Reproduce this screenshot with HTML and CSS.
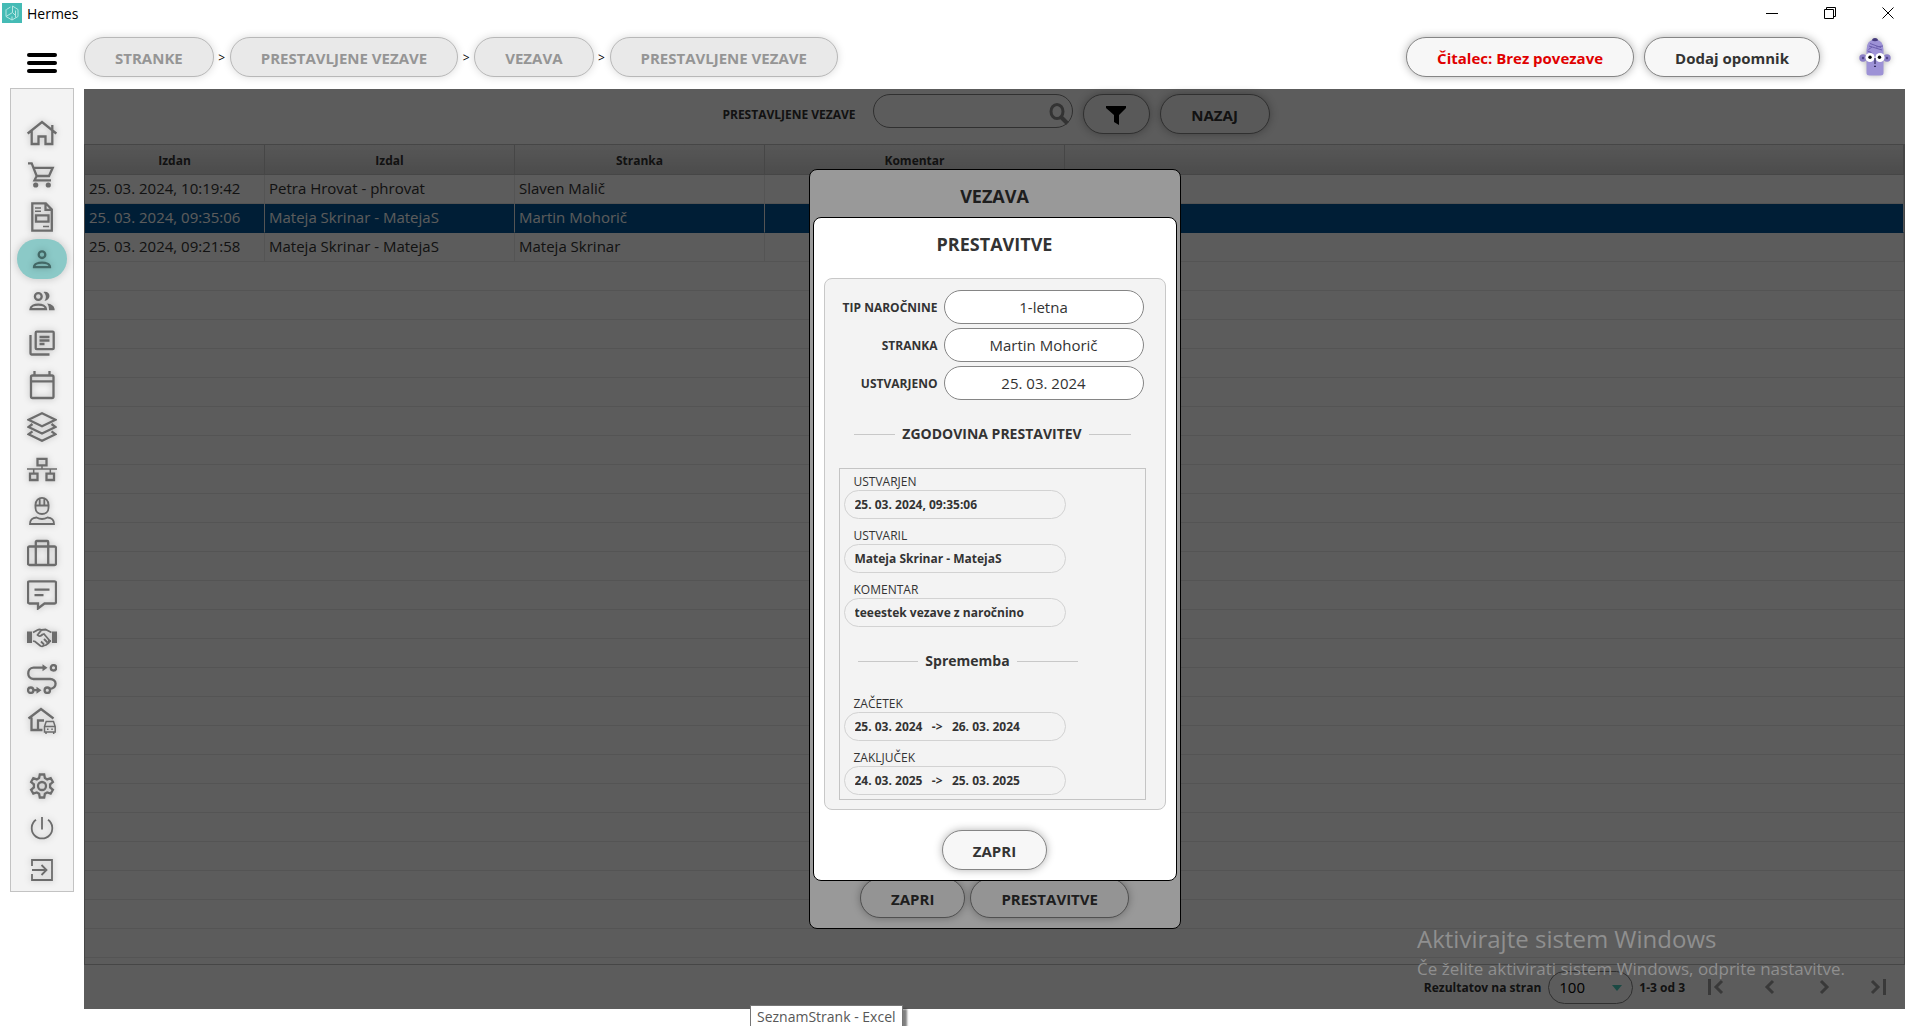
FILE: index.html
```html
<!DOCTYPE html>
<html lang="sl">
<head>
    <meta charset="UTF-8">
    <meta name="viewport" content="width=device-width, initial-scale=1.0">
    <title>Hermes</title>
    <link rel="stylesheet" href="styles.css">
</head>
<body>
    <div class="titlebar">
        <svg class="logo" viewBox="0 0 20 20" fill="none" stroke="#b5e6e2" stroke-width="1">
            <rect width="20" height="20" fill="#45bbb5" stroke="none"/>
            <path d="M4.500 6.500l4-2.500M10.500 3l5.500 3.500v7L10 17l-6-3.500v-7M10.500 3v6.500L4 13.500M10.500 9.500l3 3M13.500 7.500v7M10 17v-3.500"/>
        </svg>
        <span class="app-name">Hermes</span>
        <div class="window-buttons">
            <button type="button" aria-label="Minimiraj"><svg viewBox="0 0 12 12"><path d="M0 6.500h12"/></svg></button>
            <button type="button" aria-label="Obnovi"><svg viewBox="0 0 12 12"><path d="M.5 2.500h9v9h-9zM2.500 2.500v-2h9v9h-2"/></svg></button>
            <button type="button" aria-label="Zapri okno"><svg viewBox="0 0 12 12"><path d="M.5.5l11 11M11.500.5l-11 11"/></svg></button>
        </div>
    </div>

    <header class="header">
        <button type="button" class="menu-toggle" aria-label="Meni"><span></span><span></span><span></span></button>
        <nav class="breadcrumbs">
            <button type="button" class="btn crumb">STRANKE</button>
            <span>&gt;</span>
            <button type="button" class="btn crumb">PRESTAVLJENE VEZAVE</button>
            <span>&gt;</span>
            <button type="button" class="btn crumb">VEZAVA</button>
            <span>&gt;</span>
            <button type="button" class="btn crumb">PRESTAVLJENE VEZAVE</button>
        </nav>
        <div class="header-actions">
            <button type="button" class="btn reader">Čitalec: Brez povezave</button>
            <button type="button" class="btn">Dodaj opomnik</button>
            <svg class="avatar" viewBox="0 0 32 38">
                <path d="M7.500 35V12Q7.500 1.500 16 1.500T24.500 12v23q0 2.500-3 2.500h-11q-3 0-3-2.500z" fill="#9d92d6"/>
                <path d="M13 2.500Q13 0 16 0t3 2.500q-3 1.500-6 0z" fill="#453a7c"/>
                <path d="M10 8l13 4M11 5.500l11 4M9.500 11.500L13 9M17 9l7-1M8.500 13l4 1.500" stroke="#6b5eae" fill="none"/>
                <circle cx="4" cy="20" r="3.700" fill="#8b7fc6"/>
                <circle cx="28" cy="20" r="3.700" fill="#8b7fc6"/>
                <circle cx="4" cy="20" r="1.200" fill="#4f4488"/>
                <circle cx="28" cy="20" r="1.200" fill="#4f4488"/>
                <circle cx="11" cy="19.500" r="4.600" fill="#fff"/>
                <circle cx="21" cy="19.500" r="4.600" fill="#fff"/>
                <circle cx="11" cy="19.200" r="1.700"/>
                <circle cx="20.500" cy="19.200" r="1.700"/>
                <path d="M16 20v6M15 28.300h2" stroke="#30285c" stroke-width="1.200"/>
            </svg>
        </div>
    </header>

    <div class="layout">
        <nav class="sidebar">
            <a href="#" aria-label="Domov"><svg viewBox="0 0 30 30"><path d="M.7 15.500L15 4l14.300 11.500M4.700 13v13h6.800v-7.500h7V26h6.800V13M25.300 12V7"/></svg></a>
            <a href="#" aria-label="Košarica"><svg viewBox="0 0 30 30"><path d="M1 3.300h3.700l5 12.700h12.300l3.700-8.200H7M9.700 16L7.500 20.300H24"/><g class="solid"><circle cx="8.700" cy="25" r="2.600"/><circle cx="21.300" cy="25" r="2.600"/></g></svg></a>
            <a href="#" aria-label="Računi"><svg viewBox="0 0 30 30"><path d="M5.300 1.300h13.500l6 6.200v21.200H5.300zM18.500 1.500v6.300h6M9 13.300h12.500v6.400H9z"/><path d="M8 6h6M8 9.300h6M16 24.500h6" stroke-width="1.500"/></svg></a>
            <a href="#" class="active" aria-label="Stranke"><svg viewBox="0 0 30 30"><circle cx="15" cy="10.700" r="3.300"/><path d="M7 23.200c0-6 16-6 16 0z"/></svg></a>
            <a href="#" aria-label="Skupine"><svg viewBox="0 0 30 30"><circle cx="11.300" cy="10.500" r="3.400"/><path d="M3.500 23.200c0-6 15.500-6 15.500 0z"/><path class="solid" d="M16.500 6c7-1.500 8.500 7.500 1 9 2-3 2-6-1-9zM20 17.500c4.500.3 7.700 2.500 7.700 6.700H22c0-3-.5-5-2-6.700z"/></svg></a>
            <a href="#" aria-label="Knjižnica"><svg viewBox="0 0 30 30"><rect x="8.700" y="3.700" width="18" height="17.500" rx="1"/><path d="M3.500 7v18.500q0 1 1 1h18M12.500 9h10M12.500 12.500h10M12.500 16h5"/></svg></a>
            <a href="#" aria-label="Koledar"><svg viewBox="0 0 30 30"><rect x="4" y="5.500" width="22.500" height="22.500" rx="1.500"/><path d="M4 11.300h22.500M7.500 1v4M22.500 1v4"/></svg></a>
            <a href="#" aria-label="Sloji"><svg viewBox="0 0 30 30"><path d="M15 1.300l13.500 6.500L15 14.300 1.500 7.800zM5.500 12l-4 3L15 21.500 28.500 15l-4-3M5.500 19.300l-4 3L15 28.800l13.500-6.500-4-3"/></svg></a>
            <a href="#" aria-label="Omrežje"><svg viewBox="0 0 30 30"><path d="M10.500 4.800h9v6.500h-9zM3 19.700h7.500V26H3zM19.500 19.700H27V26h-7.500z"/><path d="M0 15h30M15 11v4M6.700 15v4.500M23.300 15v4.500" stroke-width="1.500"/></svg></a>
            <a href="#" aria-label="Delavci"><svg viewBox="0 0 30 30"><path d="M8.500 9c0-9.500 13-9.500 13 0v3c0 8-13 8-13 0zM7.500 9.500h15M12.700 3v6M17.300 3v6M3 28c0-4.500 2-6 6.500-6.500q5.500 3 11 0C25 22 27 23.500 27 28z" stroke-width="1.800"/></svg></a>
            <a href="#" aria-label="Kovček"><svg viewBox="0 0 30 30"><rect x="1" y="8.500" width="28" height="18.500" rx="1.500"/><path d="M8.800 27V4q0-1 1-1h10.400q1 0 1 1v23"/></svg></a>
            <a href="#" aria-label="Sporočila"><svg viewBox="0 0 30 30"><path d="M2.500 1.300h25q1.500 0 1.500 1.500v19q0 1.700-1.500 1.700h-10L11 28.500v-5H2.500Q1 23.500 1 21.800v-19q0-1.500 1.500-1.500zM7.500 9.700h15M7.500 15.200h9"/></svg></a>
            <a href="#" aria-label="Partnerji"><svg viewBox="0 0 30 30"><path class="solid" d="M0 9.500h5V21H0zM25 9.500h5V21h-5z"/><path d="M6 10.500l4.500-2.500q2-1 4 0l4-.5 6 3M6 19l2 .5 5.500 4.500q2 .7 3-.3l2.500-.7 2.500-2 2-2.500M14.500 8l-4 5q2 2.500 5-.5l1.500-.5 5.500 6.500M14 19.500l3 3M17 17l3.500 3.500M24 19h-3" stroke-width="1.800"/></svg></a>
            <a href="#" aria-label="Poti"><svg viewBox="0 0 30 30"><circle cx="26.500" cy="3.800" r="2.700"/><circle cx="3.700" cy="26.200" r="2.700"/><circle cx="20.300" cy="26.200" r="2.700"/><path d="M17 3.700H6.500C-.5 4-.5 15 6.500 15H23c7 0 8 9-.5 10M7 26.200h3"/><path class="solid" d="M15.500.3l5 3.500-5 3.500zM9.500 22.700l5 3.500-5 3.500z"/></svg></a>
            <a href="#" aria-label="Dostava"><svg viewBox="0 0 30 30"><path d="M1.500 12.500L14 3l12.500 9.500M4.500 11.500V24H11v-9.500h6M11 24h4.500"/><path d="M17.500 20.500l1.700-5h7.300l1.700 5v5.500H17.500zM17.500 20.500h10.700M19 26v2M26.700 26v2M20 23.200h1.500M24.300 23.200h1.500" stroke-width="1.500"/></svg></a>
            <a href="#" class="settings" aria-label="Nastavitve"><svg viewBox="0 0 30 30"><path d="M12.800 3.500h4.400l.7 3.600 2.300 1.300 3.500-1.200 2.200 3.800-2.800 2.400v3l2.800 2.400-2.200 3.800-3.500-1.200-2.300 1.300-.7 3.800h-4.400l-.7-3.800-2.300-1.300-3.500 1.200-2.200-3.800 2.800-2.400v-3L4.100 11l2.200-3.800 3.500 1.200 2.300-1.300z"/><circle cx="15" cy="15" r="4"/></svg></a>
            <a href="#" aria-label="Izklop"><svg viewBox="0 0 30 30"><path d="M9 6.800a10.300 10.300 0 1 0 12 0M15 4v12.500" stroke-width="1.800"/></svg></a>
            <a href="#" aria-label="Odjava"><svg viewBox="0 0 30 30"><path d="M5 11V5h20v20H5v-6M5 15h14M14.500 10l5 5-5 5" stroke-width="1.800"/></svg></a>
        </nav>

        <main class="content">
            <div class="toolbar">
                <label for="search">PRESTAVLJENE VEZAVE</label>
                <div class="search-box">
                    <input type="text" id="search">
                    <svg viewBox="0 0 22 22" fill="none" stroke="#8f8f8f"><ellipse cx="9" cy="8.500" rx="6" ry="7" stroke-width="3"/><path d="M13 14l6.500 6.500" stroke-width="4"/></svg>
                </div>
                <button type="button" class="btn filter" aria-label="Filter"><svg viewBox="0 0 20 20"><path d="M0 1h20v2l-7 7v10l-5-3v-7L0 3z"/></svg></button>
                <button type="button" class="btn back">NAZAJ</button>
            </div>
            <table class="grid">
                <thead>
                    <tr><th class="col-date">Izdan</th><th class="col-name">Izdal</th><th class="col-name">Stranka</th><th class="col-comment">Komentar</th><th></th></tr>
                </thead>
                <tbody>
                    <tr><td>25. 03. 2024, 10:19:42</td><td>Petra Hrovat - phrovat</td><td>Slaven Malič</td><td></td><td></td></tr>
                    <tr class="selected"><td>25. 03. 2024, 09:35:06</td><td>Mateja Skrinar - MatejaS</td><td>Martin Mohorič</td><td></td><td></td></tr>
                    <tr><td>25. 03. 2024, 09:21:58</td><td>Mateja Skrinar - MatejaS</td><td>Mateja Skrinar</td><td></td><td></td></tr>
                </tbody>
            </table>
            <div class="empty-rows"></div>
            <div class="pager">
                <label for="page-size">Rezultatov na stran</label>
                <div class="page-size">
                    <select id="page-size"><option>100</option></select>
                    <svg viewBox="0 0 10 6"><path d="M0 0h10L5 6z" fill="#4bcdbd"/></svg>
                </div>
                <span>1-3 od 3</span>
                <div class="pager-buttons">
                    <button type="button" aria-label="Prva stran"><svg viewBox="0 0 16 16"><path d="M1.500 0v16M14 2L8 8l6 6"/></svg></button>
                    <button type="button" aria-label="Prejšnja stran"><svg viewBox="0 0 16 16"><path d="M11 2L5 8l6 6"/></svg></button>
                    <button type="button" aria-label="Naslednja stran"><svg viewBox="0 0 16 16"><path d="M5 2l6 6-6 6"/></svg></button>
                    <button type="button" aria-label="Zadnja stran"><svg viewBox="0 0 16 16"><path d="M2 2l6 6-6 6M14.500 0v16"/></svg></button>
                </div>
            </div>

            <div class="overlay">
                <section class="dialog dialog-vezava">
                    <h2>VEZAVA</h2>
                    <div class="dialog-buttons">
                        <button type="button" class="btn">ZAPRI</button>
                        <button type="button" class="btn">PRESTAVITVE</button>
                    </div>
                </section>
            </div>

            <div class="overlay">
                <section class="dialog dialog-prestavitve">
                    <h2>PRESTAVITVE</h2>
                    <div class="panel">
                        <div class="fields">
                            <label for="tip">TIP NAROČNINE</label>
                            <input type="text" id="tip" value="1-letna" readonly>
                            <label for="stranka">STRANKA</label>
                            <input type="text" id="stranka" value="Martin Mohorič" readonly>
                            <label for="ustvarjeno">USTVARJENO</label>
                            <input type="text" id="ustvarjeno" value="25. 03. 2024" readonly>
                        </div>
                        <h3 class="divider">ZGODOVINA PRESTAVITEV</h3>
                        <div class="history">
                            <div class="entry">
                                <label for="ustvarjen">USTVARJEN</label>
                                <input type="text" id="ustvarjen" value="25. 03. 2024, 09:35:06" readonly>
                            </div>
                            <div class="entry">
                                <label for="ustvaril">USTVARIL</label>
                                <input type="text" id="ustvaril" value="Mateja Skrinar - MatejaS" readonly>
                            </div>
                            <div class="entry">
                                <label for="komentar">KOMENTAR</label>
                                <input type="text" id="komentar" value="teeestek vezave z naročnino" readonly>
                            </div>
                            <h4 class="divider change">Sprememba</h4>
                            <div class="entry">
                                <label for="zacetek">ZAČETEK</label>
                                <input type="text" id="zacetek" value="25. 03. 2024   -&gt;   26. 03. 2024" readonly>
                            </div>
                            <div class="entry">
                                <label for="zakljucek">ZAKLJUČEK</label>
                                <input type="text" id="zakljucek" value="24. 03. 2025   -&gt;   25. 03. 2025" readonly>
                            </div>
                        </div>
                    </div>
                    <div class="dialog-buttons">
                        <button type="button" class="btn">ZAPRI</button>
                    </div>
                </section>
            </div>
        </main>
    </div>

    <div class="watermark">
        <p class="watermark-title">Aktivirajte sistem Windows</p>
        <p>Če želite aktivirati sistem Windows, odprite nastavitve.</p>
    </div>
    <div class="taskbar-tip">SeznamStrank - Excel</div>
</body>
</html>
```
FILE: styles.css
```css
* {
    box-sizing: border-box;
}

body {
    margin: 0;
    min-height: 100vh;
    display: flex;
    flex-direction: column;
    position: relative;
    overflow: hidden;
    background: #fff;
    color: #333;
    font-family: "Open Sans", "Noto Sans", sans-serif;
    font-size: 15px;
}

button,
input,
select {
    font-family: inherit;
    color: inherit;
}

button {
    padding: 0;
    border: none;
    background: none;
}

/* Window title bar */
.titlebar {
    display: flex;
    align-items: center;
    height: 26px;
    padding: 0 25px 0 2px;
    color: #000;
}

.logo {
    width: 20px;
    height: 20px;
    margin-right: 5px;
}

.app-name {
    font-size: 14px;
}

.window-buttons {
    display: flex;
    gap: 46px;
    margin-left: auto;
}

.window-buttons svg {
    display: block;
    width: 12px;
    height: 12px;
    fill: none;
    stroke: #000;
}

/* Header */
.header {
    display: flex;
    align-items: center;
    height: 62px;
    padding: 0 28px 0 27px;
}

.menu-toggle {
    display: flex;
    flex-direction: column;
    gap: 4px;
    width: 30px;
    margin: 12px 27px 0 0;
}

.menu-toggle span {
    height: 4px;
    border-radius: 2px;
    background: #000;
}

.breadcrumbs {
    display: flex;
    align-items: center;
}

.breadcrumbs span {
    width: 16px;
    text-align: center;
    font-size: 12px;
    color: #000;
}

.btn {
    height: 40px;
    padding: 2px 30px 0;
    border: 1px solid #858585;
    border-radius: 20px;
    background: #f7f7f7;
    box-shadow: 0 0 8px rgba(0, 0, 0, 0.3);
    font-size: 15px;
    font-weight: 700;
    white-space: nowrap;
}

.crumb {
    border-color: #b8b8b8;
    background: #e9e9e9;
    box-shadow: 0 0 8px rgba(0, 0, 0, 0.15);
    color: #959595;
}

.header-actions {
    display: flex;
    align-items: center;
    gap: 10px;
    margin-left: auto;
}

.reader {
    color: #e00000;
}

.avatar {
    width: 32px;
    height: 38px;
    margin-left: 29px;
    filter: drop-shadow(0 0 3px rgba(0, 0, 0, 0.3));
}

.layout {
    flex: 1;
    display: flex;
    align-items: flex-start;
    gap: 10px;
    padding: 0 14px 17px 10px;
}

/* Sidebar */
.sidebar {
    display: flex;
    flex-direction: column;
    align-items: center;
    gap: 2px;
    width: 64px;
    padding: 24px 0 1px;
    border: 1px solid #c3c3c3;
    background: #f3f3f3;
}

.sidebar a {
    display: flex;
    align-items: center;
    justify-content: center;
    width: 50px;
    height: 40px;
    border-radius: 20px;
}

.sidebar .active {
    background: #8bc9c7;
    box-shadow: 0 0 8px rgba(0, 0, 0, 0.2);
}

.sidebar .settings {
    margin-top: 23px;
}

.sidebar svg {
    width: 30px;
    height: 30px;
    fill: none;
    stroke: #6c6c6c;
    stroke-width: 2.3;
    filter: drop-shadow(0 0 3px rgba(0, 0, 0, 0.25));
}

.sidebar .active svg {
    stroke: #436866;
}

.sidebar .solid {
    fill: #6c6c6c;
    stroke: none;
}

/* Main area */
.content {
    position: relative;
    flex: 1;
    align-self: stretch;
    display: flex;
    flex-direction: column;
    margin-top: 1px;
    background: #fff;
}

.toolbar {
    display: flex;
    align-items: flex-start;
    justify-content: center;
    gap: 10px;
    height: 55px;
    padding: 5px 0 0 3px;
}

.toolbar label {
    margin-right: 7px;
    font-size: 12px;
    font-weight: 700;
    line-height: 42px;
}

.search-box {
    position: relative;
}

.search-box input {
    display: block;
    width: 200px;
    height: 34px;
    border: 1px solid #858585;
    border-radius: 17px;
    background: #fff;
}

.search-box svg {
    position: absolute;
    right: 3px;
    top: 9px;
    width: 22px;
    height: 22px;
}

.filter {
    width: 67px;
    padding: 0;
}

.filter svg {
    width: 20px;
    height: 20px;
    vertical-align: middle;
}

.back {
    width: 110px;
}

.grid {
    width: 100%;
    border: 1px solid #c4c4c4;
    border-bottom: none;
    border-collapse: separate;
    border-spacing: 0;
    table-layout: fixed;
}

.grid th,
.grid td {
    border-right: 1px solid #ececec;
    border-bottom: 1px solid #ececec;
    overflow: hidden;
    white-space: nowrap;
}

.grid th {
    height: 30px;
    padding: 2px 0 0;
    border-right-color: #c4c4c4;
    border-bottom-color: #c4c4c4;
    background: linear-gradient(#f2f2f2, #d4d4d4);
    font-size: 12px;
    font-weight: 700;
}

.grid td {
    height: 29px;
    padding: 0 4px 2px;
    font-size: 15px;
}

.grid .col-date {
    width: 180px;
}

.grid .col-name {
    width: 250px;
}

.grid .col-comment {
    width: 300px;
}

.grid .selected td {
    border-bottom-color: #005496;
    background: #005496;
    color: #fff;
}

.empty-rows {
    flex: 1;
    border: 1px solid #c4c4c4;
    border-top: none;
    background: repeating-linear-gradient(#fff 0, #fff 28px, #ececec 28px, #ececec 29px);
}

.pager {
    display: flex;
    align-items: center;
    justify-content: flex-end;
    height: 44px;
    padding: 0 19px 0 0;
    font-size: 12px;
    font-weight: 700;
}

.page-size {
    position: relative;
    margin: 0 6px 0 7px;
}

.page-size select {
    appearance: none;
    display: block;
    width: 85px;
    height: 33px;
    padding: 0 10px;
    border: 1px solid #858585;
    border-radius: 17px;
    background: #fff;
    color: #000;
    font-size: 15px;
}

.page-size svg {
    position: absolute;
    right: 11px;
    top: 14px;
    width: 10px;
    height: 6px;
}

.pager-buttons {
    display: flex;
    gap: 38px;
    margin-left: 23px;
}

.pager-buttons svg {
    display: block;
    width: 16px;
    height: 16px;
    fill: none;
    stroke: #a0a0a0;
    stroke-width: 3;
}

/* Dialogs */
.overlay {
    position: absolute;
    inset: 0;
    display: flex;
    align-items: center;
    justify-content: center;
    background: rgba(0, 0, 0, 0.4);
}

.dialog {
    display: flex;
    flex-direction: column;
    padding: 10px;
    border: 1px solid #000;
    border-radius: 8px;
    background: #fff;
}

.dialog-vezava {
    width: 372px;
    min-height: 760px;
}

.dialog-prestavitve {
    width: 364px;
}

.dialog h2 {
    margin: 0 0 18px;
    font-size: 18px;
    line-height: 32px;
    text-align: center;
}

.dialog-buttons {
    display: flex;
    justify-content: center;
    gap: 5px;
    margin-top: auto;
}

.panel {
    margin-bottom: 20px;
    padding: 11px 19px 9px 14px;
    border: 1px solid #c8c8c8;
    border-radius: 8px;
    background: #f3f3f3;
}

.fields {
    display: grid;
    grid-template-columns: 1fr 200px;
    align-items: center;
    gap: 4px 6px;
    padding-right: 2px;
}

.fields label {
    font-size: 12px;
    font-weight: 700;
    text-align: right;
    white-space: nowrap;
}

.fields input {
    min-width: 0;
    height: 34px;
    border: 1px solid #858585;
    border-radius: 17px;
    background: #fff;
    font-size: 15px;
    text-align: center;
}

.divider {
    display: flex;
    align-items: center;
    gap: 7px;
    margin: 24px 15px;
    font-size: 14px;
    line-height: 20px;
    white-space: nowrap;
}

.divider::before,
.divider::after {
    content: "";
    flex: 1;
    height: 1px;
    background: #c8c8c8;
}

.history {
    display: flex;
    flex-direction: column;
    gap: 8px;
    padding: 4px;
    border: 1px solid #c4c4c4;
}

.entry {
    width: 222px;
}

.entry label {
    display: block;
    padding-left: 10px;
    font-size: 12px;
    line-height: 17px;
}

.entry input {
    display: block;
    width: 100%;
    height: 29px;
    padding: 0 10px;
    border: 1px solid #d2d2d2;
    border-radius: 15px;
    background: none;
    font-size: 12px;
    font-weight: 700;
}

.change {
    width: 220px;
    margin: 16px 14px;
}

/* System layer above the application */
.watermark {
    position: absolute;
    right: 74px;
    bottom: 44px;
    color: #8f8f8f;
    font-size: 17px;
    pointer-events: none;
}

.watermark p {
    margin: 0;
    line-height: 26px;
}

.watermark .watermark-title {
    font-size: 24px;
    line-height: 34px;
}

.taskbar-tip {
    position: absolute;
    left: 750px;
    bottom: -3px;
    padding: 0 6px;
    border: 1px solid #767676;
    background: #fff;
    box-shadow: 4px 4px 2px rgba(0, 0, 0, 0.5);
    color: #575757;
    font-size: 14px;
    line-height: 22px;
}
```
